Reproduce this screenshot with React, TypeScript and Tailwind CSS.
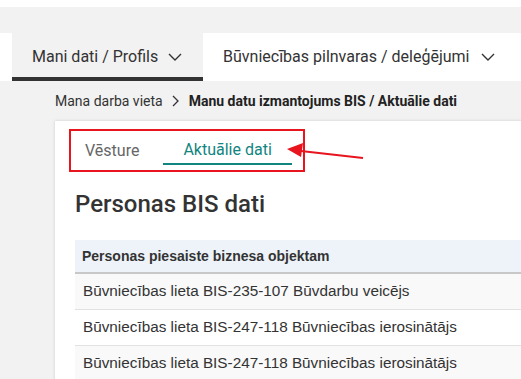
import React from "react";

const Chevron = ({ className = "" }: { className?: string }) => (
  <svg width="14" height="8" viewBox="0 0 14 8" className={className} fill="none">
    <path d="M1 1l6 6 6-6" stroke="#333" strokeWidth="1.4" />
  </svg>
);

export default function App() {
  const rows = [
    "Būvniecības lieta BIS-235-107 Būvdarbu veicējs",
    "Būvniecības lieta BIS-247-118 Būvniecības ierosinātājs",
    "Būvniecības lieta BIS-247-118 Būvniecības ierosinātājs",
  ];
  return (
    <div className="w-[521px] h-[379px] overflow-hidden bg-[#f2f2f2] text-[#333]" style={{ fontFamily: "Roboto, 'Liberation Sans', sans-serif" }}>
      <div className="h-[7px] bg-white" />
      <div className="h-[26px]" />
      <nav className="h-[48px] bg-white flex pl-[12px] whitespace-nowrap">
        <div className="w-[191px] bg-[#f2f2f2] border-b-4 border-[#333] flex items-center pl-[20px] pt-[4px] text-[16px] text-[#333]">
          Mani dati / Profils
          <Chevron className="ml-[10px]" />
        </div>
        <div className="flex items-center pl-[20px] text-[16px] text-[#333]">
          Būvniecības pilnvaras / deleģējumi
          <Chevron className="ml-[12px]" />
        </div>
      </nav>
      <div className="h-[40px] flex items-center pl-[55px] text-[14px] whitespace-nowrap">
        <span className="text-[#333]">Mana darba vieta</span>
        <svg width="8" height="12" viewBox="0 0 8 12" className="mx-[9px]" fill="none">
          <path d="M1 1l5 5-5 5" stroke="#333" strokeWidth="1.3" />
        </svg>
        <span className="font-bold text-[#222]">Manu datu izmantojums BIS / Aktuālie dati</span>
      </div>
      <div className="relative ml-[55px] bg-white shadow-[0_0_3px_rgba(0,0,0,0.15)] pt-[8px] pl-[14px] h-[300px]">
        <div className="w-[236px] h-[43px] border-2 border-[#e8141e] flex items-stretch pl-[14px] text-[16px]">
          <div className="flex items-center text-[#666] pt-[1px]">Vēsture</div>
          <div className="ml-[24px] mr-[11px] px-[20px] flex items-center text-[#11857f] border-b-2 border-[#11857f] mb-[5px] pt-[6px]">
            Aktuālie dati
          </div>
        </div>
        <svg className="absolute left-[230px] top-[20px]" width="82" height="20" viewBox="0 0 82 20" fill="none">
          <path d="M16 10 L78 17" stroke="#e8141e" strokeWidth="2" />
          <path d="M2 8 L18 2 L16 16 Z" fill="#e8141e" />
        </svg>
        <h1 className="mt-[16px] ml-[6px] text-[24px] leading-[32px] font-medium text-[#333]" style={{ fontFamily: "Roboto, 'Liberation Sans', sans-serif" }}>
          Personas BIS dati
        </h1>
        <div className="mt-[20px] ml-[6px]" style={{ fontFamily: "'Liberation Sans', Arial, sans-serif" }}>
          <div className="h-[34px] bg-[#eef3fa] border-b-2 border-[#c8c8c8] flex items-center pl-[7px] text-[14px] font-bold text-[#333]">
            Personas piesaiste biznesa objektam
          </div>
          {rows.map((r, i) => (
            <div
              key={i}
              className={`h-[36px] border-b border-[#e2e2e2] flex items-center pl-[8px] text-[15.3px] text-[#333] whitespace-nowrap ${i % 2 === 0 ? "bg-[#f9f9f9]" : "bg-white"}`}
            >
              {r}
            </div>
          ))}
        </div>
      </div>
    </div>
  );
}
